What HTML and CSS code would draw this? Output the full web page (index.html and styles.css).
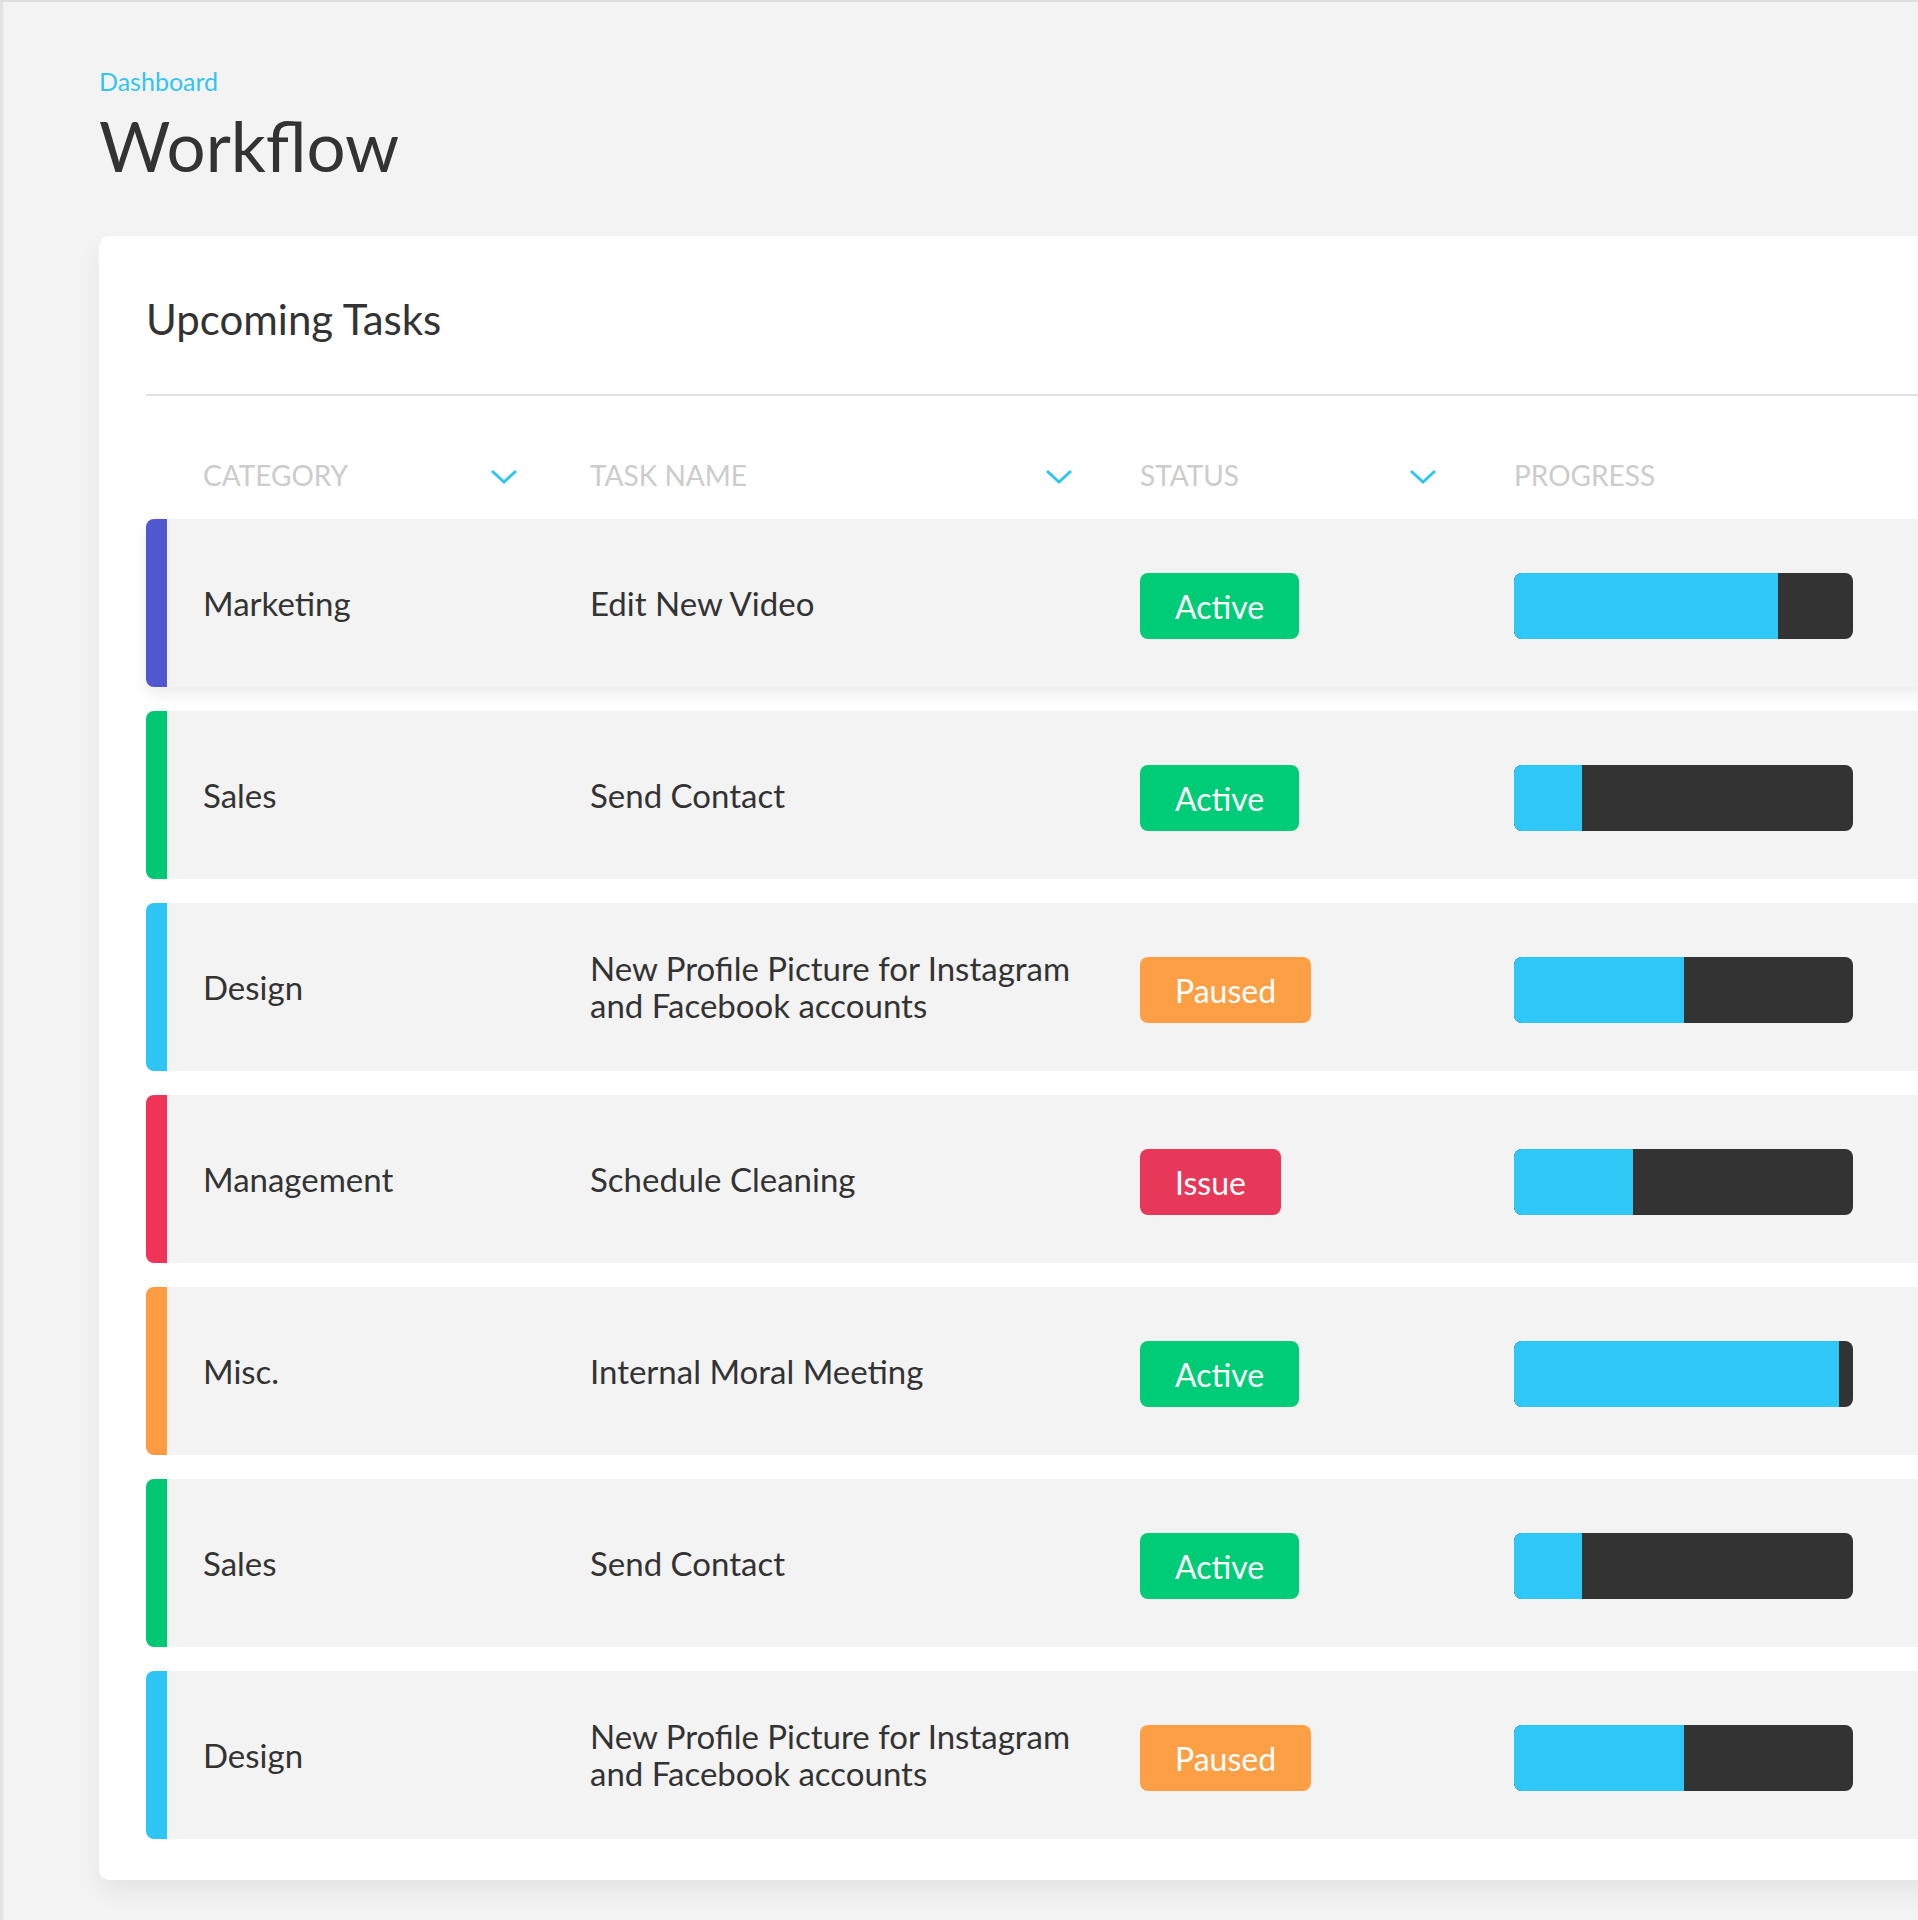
FILE: index.html
```html
<!DOCTYPE html>
<html lang="en">
<head>
    <meta charset="UTF-8">
    <meta name="viewport" content="width=device-width, initial-scale=1.0">
    <title>Workflow</title>
    <link rel="stylesheet" href="styles.css">
</head>
<body>
    <div class="page">
        <div class="crumb">Dashboard</div>
        <h1 class="title">Workflow</h1>

        <div class="card">
            <h2 class="card-title">Upcoming Tasks</h2>
            <div class="divider"></div>

            <div class="table-head">
                <div class="th col-category">Category
                    <svg class="chevron" viewBox="0 0 28 16"><polyline points="2,2 14,13 26,2" /></svg>
                </div>
                <div class="th col-task">Task Name
                    <svg class="chevron" viewBox="0 0 28 16"><polyline points="2,2 14,13 26,2" /></svg>
                </div>
                <div class="th col-status">Status
                    <svg class="chevron" viewBox="0 0 28 16"><polyline points="2,2 14,13 26,2" /></svg>
                </div>
                <div class="th">Progress</div>
            </div>

            <div class="rows">
                <div class="row marketing raised">
                    <div class="cell">Marketing</div>
                    <div class="cell">Edit New Video</div>
                    <div class="cell"><span class="badge active">Active</span></div>
                    <div class="cell"><div class="bar"><div class="fill" style="width: 78%"></div></div></div>
                </div>
                <div class="row sales">
                    <div class="cell">Sales</div>
                    <div class="cell">Send Contact</div>
                    <div class="cell"><span class="badge active">Active</span></div>
                    <div class="cell"><div class="bar"><div class="fill" style="width: 20%"></div></div></div>
                </div>
                <div class="row design">
                    <div class="cell">Design</div>
                    <div class="cell">New Profile Picture for Instagram<br>and Facebook accounts</div>
                    <div class="cell"><span class="badge paused">Paused</span></div>
                    <div class="cell"><div class="bar"><div class="fill" style="width: 50%"></div></div></div>
                </div>
                <div class="row management">
                    <div class="cell">Management</div>
                    <div class="cell">Schedule Cleaning</div>
                    <div class="cell"><span class="badge issue">Issue</span></div>
                    <div class="cell"><div class="bar"><div class="fill" style="width: 35%"></div></div></div>
                </div>
                <div class="row misc">
                    <div class="cell">Misc.</div>
                    <div class="cell">Internal Moral Meeting</div>
                    <div class="cell"><span class="badge active">Active</span></div>
                    <div class="cell"><div class="bar"><div class="fill" style="width: 96%"></div></div></div>
                </div>
                <div class="row sales">
                    <div class="cell">Sales</div>
                    <div class="cell">Send Contact</div>
                    <div class="cell"><span class="badge active">Active</span></div>
                    <div class="cell"><div class="bar"><div class="fill" style="width: 20%"></div></div></div>
                </div>
                <div class="row design">
                    <div class="cell">Design</div>
                    <div class="cell">New Profile Picture for Instagram<br>and Facebook accounts</div>
                    <div class="cell"><span class="badge paused">Paused</span></div>
                    <div class="cell"><div class="bar"><div class="fill" style="width: 50%"></div></div></div>
                </div>
            </div>
        </div>
    </div>
</body>
</html>
```

FILE: styles.css
```css
body {
    margin: 0;
    background-color: #f3f3f3;
    font-family: Lato, "Open Sans", sans-serif;
    color: #333333;
    border-top: 2px solid #dedede;
    border-left: 3px solid #e3e3e3;
    overflow-x: hidden;
}

.page {
    padding: 64px 0 40px 96px;
}

.crumb {
    font-size: 25px;
    line-height: 30px;
    color: #35c4f0;
}

.title {
    margin: 10px 0 0;
    font-size: 69px;
    line-height: 80px;
    font-weight: 400;
    color: #333333;
}

.card {
    margin-top: 50px;
    margin-right: -40px;
    padding: 60px 0 41px 47px;
    background: #ffffff;
    border-radius: 10px;
    box-shadow: 0 12px 24px rgba(0, 0, 0, 0.06);
}

.card-title {
    margin: 0;
    font-size: 42px;
    line-height: 46px;
    font-weight: 400;
    color: #333333;
}

.divider {
    margin-top: 52px;
    height: 2px;
    background: #e2e2e2;
}

.table-head,
.row {
    display: grid;
    grid-template-columns: 387px 550px 374px 1fr;
    align-items: center;
}

.table-head {
    height: 58px;
    margin: 50px 0 15px;
    padding-left: 57px;
}

.th {
    display: flex;
    justify-content: space-between;
    align-items: center;
    padding-right: 72px;
    font-size: 28px;
    text-transform: uppercase;
    color: #cccccc;
}

.th.col-task {
    padding-right: 67px;
}

.th.col-status {
    padding-right: 77px;
}

.chevron {
    width: 28px;
    height: 16px;
    margin-top: 4px;
    fill: none;
    stroke: #2ec5f5;
    stroke-width: 3;
}

.rows {
    display: flex;
    flex-direction: column;
    gap: 24px;
}

.row {
    height: 168px;
    padding-left: 36px;
    background: #f3f3f3;
    border-left: 21px solid #cccccc;
    border-radius: 8px 0 0 8px;
    font-size: 33px;
    line-height: 37px;
    color: #333333;
}

.row.raised {
    box-shadow: 0 8px 14px rgba(0, 0, 0, 0.07);
}

.row.marketing { border-left-color: #5058cf; }
.row.sales { border-left-color: #00c872; }
.row.design { border-left-color: #2ec5f5; }
.row.management { border-left-color: #ef3458; }
.row.misc { border-left-color: #fd9c42; }

.badge {
    display: inline-flex;
    align-items: center;
    height: 66px;
    margin-top: 6px;
    padding: 0 35px;
    border-radius: 8px;
    color: #ffffff;
    font-size: 32px;
}

.badge.active { background: #00cc77; }
.badge.paused { background: #fd9f45; }
.badge.issue { background: #e8385a; }

.bar {
    width: 339px;
    height: 66px;
    margin-top: 6px;
    border-radius: 8px;
    background: #333333;
    overflow: hidden;
}

.fill {
    height: 100%;
    background: #2ec7f6;
}
```
